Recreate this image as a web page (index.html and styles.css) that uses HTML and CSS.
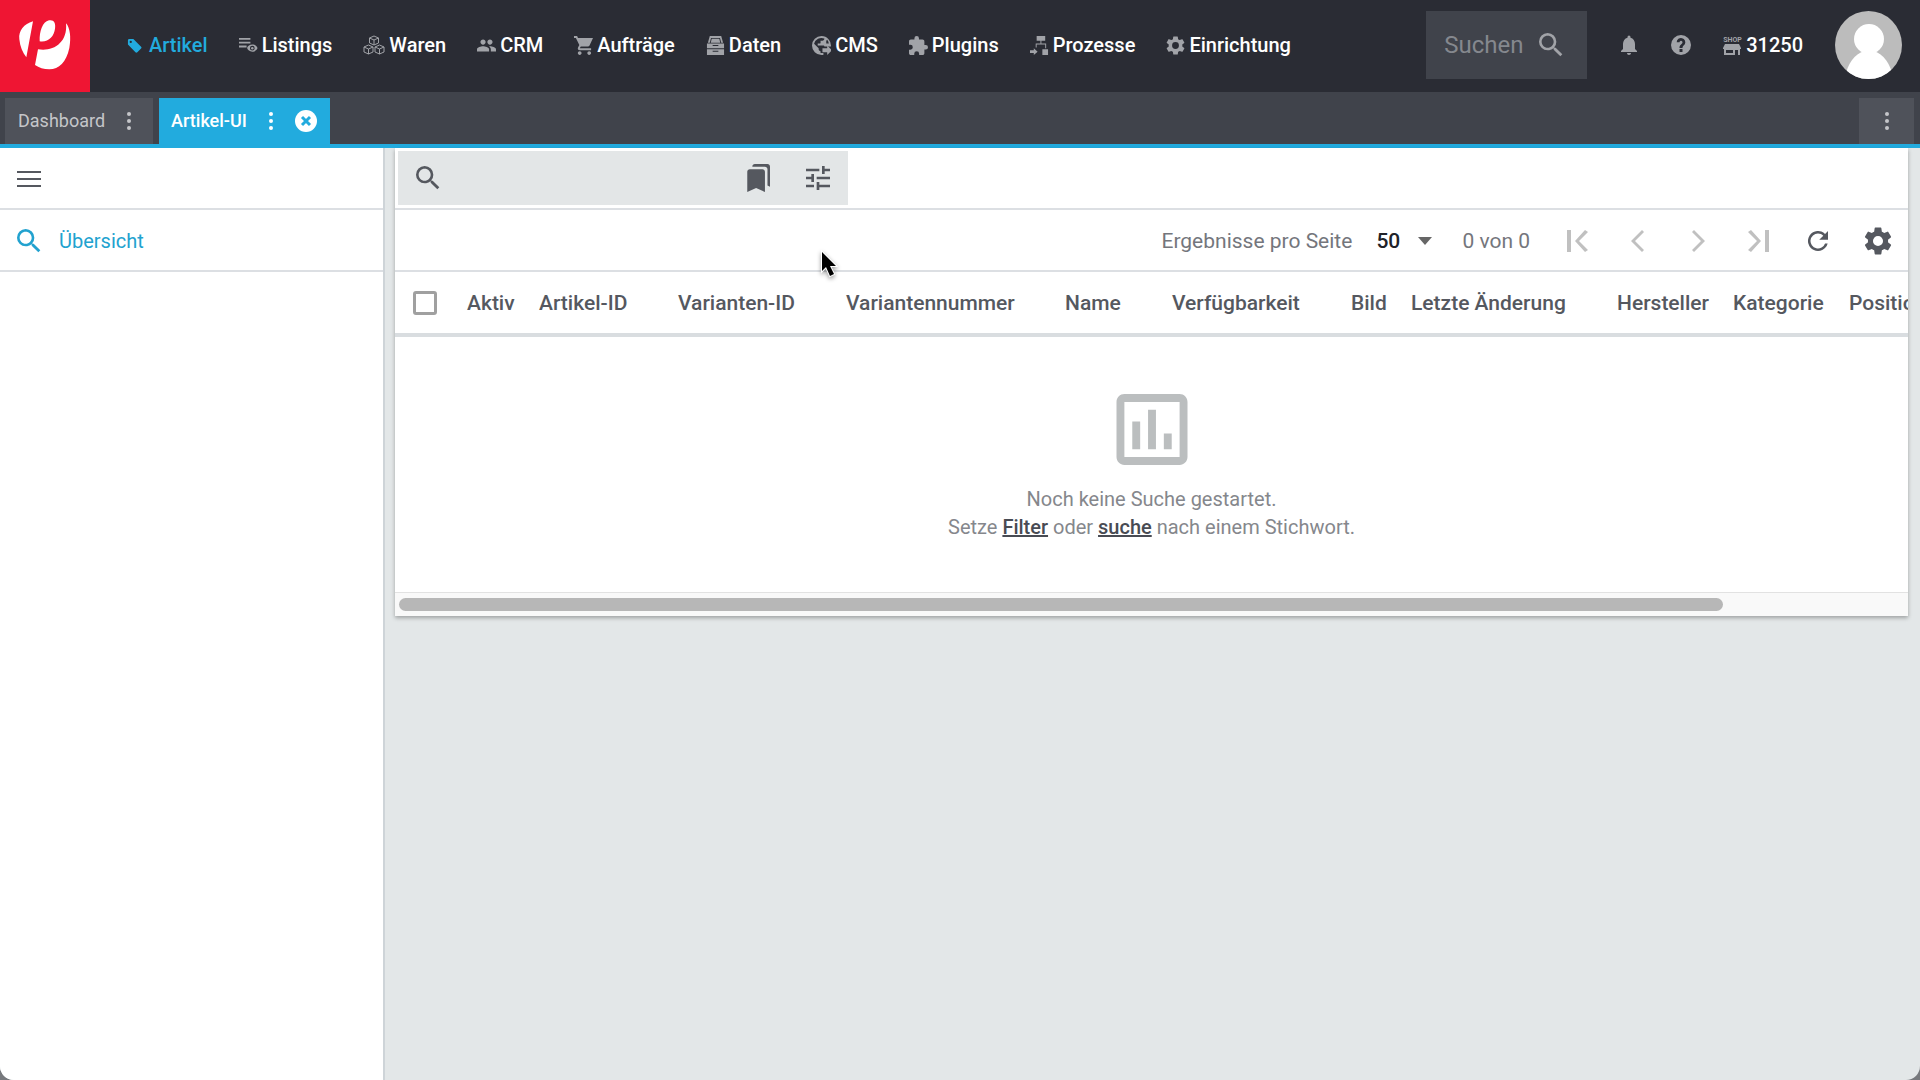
FILE: index.html
```
<!DOCTYPE html>
<html lang="de">
<head>
    <meta charset="UTF-8">
    <meta name="viewport" content="width=device-width, initial-scale=1.0">
    <title>Artikel-UI</title>
    <link rel="stylesheet" href="styles.css">
</head>
<body>
    <!-- shared icons -->
    <svg class="sprite" aria-hidden="true">
        <symbol id="search" viewBox="3 3 18 18"><path d="M15.5 14h-.79l-.28-.27A6.47 6.47 0 0 0 16 9.5 6.5 6.5 0 1 0 9.5 16c1.61 0 3.09-.59 4.23-1.57l.27.28v.79l5 4.99L20.49 19l-4.99-5zm-6 0C7.01 14 5 11.99 5 9.5S7.01 5 9.5 5 14 7.01 14 9.5 11.99 14 9.5 14z"/></symbol>
        <symbol id="gear" viewBox="2 2 20 20"><path d="M19.14 12.94c.04-.3.06-.61.06-.94 0-.32-.02-.64-.07-.94l2.03-1.58a.49.49 0 0 0 .12-.61l-1.92-3.32a.49.49 0 0 0-.59-.22l-2.39.96a7 7 0 0 0-1.62-.94l-.36-2.54a.48.48 0 0 0-.48-.41h-3.84a.47.47 0 0 0-.47.41l-.36 2.54c-.59.24-1.13.57-1.62.94l-2.39-.96a.48.48 0 0 0-.59.22L2.74 8.87a.47.47 0 0 0 .12.61l2.03 1.58a6 6 0 0 0-.07.94c0 .31.02.64.07.94l-2.03 1.58a.49.49 0 0 0-.12.61l1.92 3.32c.12.22.37.29.59.22l2.39-.96c.5.38 1.03.7 1.62.94l.36 2.54c.05.24.24.41.48.41h3.84c.24 0 .44-.17.47-.41l.36-2.54a7 7 0 0 0 1.62-.94l2.39.96c.22.08.47 0 .59-.22l1.92-3.32a.47.47 0 0 0-.12-.61zM12 15.6a3.6 3.6 0 1 1 0-7.2 3.6 3.6 0 0 1 0 7.2z"/></symbol>
        <symbol id="dots" viewBox="0 0 6 20"><circle cx="3" cy="3" r="2"/><circle cx="3" cy="10" r="2"/><circle cx="3" cy="17" r="2"/></symbol>
    </svg>

    <header class="topbar">
        <a class="logo" href="#" aria-label="Startseite">
            <svg viewBox="0 0 270 276">
                <path d="M99 64C72 72 55 92 58 118c2 22 10 40 21 54z"/>
                <path d="M119 124c-1-30 8-58 28-63 14-3 21 8 18 25-3 23-20 42-46 38z"/>
                <path d="M114 148c43 8 90-18 84-78 12 13 16 42 10 74-9 42-31 64-60 64-17 0-31-5-43-13z"/>
            </svg>
        </a>
        <nav class="main-nav">
            <a class="current" href="#">
                <svg class="icon small" viewBox="0 0 16 16"><path d="M1 2.500A1.500 1.500 0 0 1 2.500 1h4.300L15 9.200a1.400 1.400 0 0 1 0 2l-4 4a1.400 1.400 0 0 1-2 0L1 7zM4 3a1.200 1.200 0 1 0 0 2.400A1.200 1.200 0 0 0 4 3z"/></svg>Artikel
            </a>
            <a href="#">
                <svg class="icon" viewBox="0 0 20 20"><path d="M0 2h12v2H0zM0 6h12v2H0zM0 10h8v2H0z"/><path d="M14 9c-2.800 0-4.800 1.600-5.500 3.700C9.200 14.900 11.200 16.500 14 16.500s4.800-1.600 5.500-3.800C18.800 10.600 16.800 9 14 9zm0 1.300a2.500 2.500 0 1 1 0 5 2.500 2.500 0 0 1 0-5z"/><circle cx="14" cy="12.800" r="1.300"/></svg>Listings
            </a>
            <a href="#">
                <svg class="icon wide line" viewBox="0 0 22 20"><path d="M11 1l4.500 2v5L11 10 6.500 8V3zM6.500 3L11 5l4.500-2M11 5v5M5.500 10l4.500 2v5l-4.500 2L1 17v-5zM1 12l4.500 2 4.500-2M5.500 14v5M16.500 10l4.500 2v5l-4.500 2-4.500-2v-5zM12 12l4.500 2 4.500-2M16.500 14v5"/></svg>Waren
            </a>
            <a href="#">
                <svg class="icon" viewBox="1 2 22 20"><path d="M16 11c1.660 0 2.990-1.340 2.990-3S17.660 5 16 5s-3 1.340-3 3 1.340 3 3 3zm-8 0c1.660 0 2.990-1.340 2.990-3S9.660 5 8 5 5 6.340 5 8s1.340 3 3 3zm0 2c-2.330 0-7 1.170-7 3.500V19h14v-2.500c0-2.330-4.670-3.500-7-3.500zm8 0c-.29 0-.62.02-.97.05 1.160.84 1.970 1.970 1.970 3.450V19h6v-2.500c0-2.330-4.670-3.500-7-3.500z"/></svg>CRM
            </a>
            <a href="#">
                <svg class="icon" viewBox="1 2 20 20"><path d="M7 18c-1.100 0-1.990.9-1.990 2S5.900 22 7 22s2-.9 2-2-.9-2-2-2zM1 2v2h2l3.600 7.590-1.350 2.450C4.520 15.370 5.480 17 7 17h12v-2H7.420l-.17-.25.9-1.750h7.450c.75 0 1.410-.41 1.750-1.030L21 4H5.210l-.94-2zm16 16c-1.100 0-1.990.9-1.990 2s.89 2 1.990 2 2-.9 2-2-.9-2-2-2z"/></svg>Aufträge
            </a>
            <a href="#">
                <svg class="icon" viewBox="0 0 20 20"><path d="M4 0h12l2 7h-2l-1.300-5H5.300L4 7H2zM6 3h8l1 4H5zM1 8h18v5H1zm6 1.500v1h6v-1zM1 14h18v6H1zm6 1.500v1h6v-1z" fill-rule="evenodd"/></svg>Daten
            </a>
            <a href="#">
                <svg class="icon" viewBox="2 2 20 20"><path d="M12 2a10 10 0 0 0 0 20h2v-2l-3-.1v-1.900c-1.100 0-2-.9-2-2v-1L4.200 10.200A8 8 0 0 1 15 4.600V5c0 1.100-.9 2-2 2h-2v2c0 .55-.45 1-1 1H8v2h6c.55 0 1 .45 1 1h6.900A10 10 0 0 0 12 2zm7.700 8H17V7l1-1a8 8 0 0 1 1.700 4z"/><path d="M13 15h5v-3l5 5-5 5v-3h-5z"/></svg>CMS
            </a>
            <a href="#">
                <svg class="icon" viewBox="2 1 21 21"><path d="M20.500 11H19V7c0-1.100-.9-2-2-2h-4V3.500a2.500 2.500 0 0 0-5 0V5H4c-1.100 0-1.990.9-1.990 2v3.800H3.500a2.700 2.700 0 0 1 0 5.400H2V20c0 1.100.9 2 2 2h3.800v-1.500a2.700 2.700 0 0 1 5.400 0V22H17c1.100 0 2-.9 2-2v-4h1.500a2.500 2.500 0 0 0 0-5z"/></svg>Plugins
            </a>
            <a href="#">
                <svg class="icon" viewBox="0 0 20 20"><path d="M7 0h9v5h-4v3h5v5h-1v-4H7v3H6V8h5V5H7zM13 14h6v6h-6zM0 15h4v-2l4 3.500L4 20v-2H0z"/></svg>Prozesse
            </a>
            <a href="#">
                <svg class="icon"><use href="#gear"/></svg>Einrichtung
            </a>
        </nav>
        <label class="global-search">
            <input type="text" placeholder="Suchen" aria-label="Suchen">
            <svg class="icon large"><use href="#search"/></svg>
        </label>
        <div class="top-actions">
            <button aria-label="Benachrichtigungen">
                <svg class="icon" viewBox="2 2 20 20"><path d="M12 22c1.100 0 2-.9 2-2h-4c0 1.100.9 2 2 2zm6-6v-5c0-3.070-1.640-5.640-4.500-6.320V4a1.500 1.500 0 0 0-3 0v.68C7.630 5.360 6 7.920 6 11v5l-2 2v1h16v-1z"/></svg>
            </button>
            <button aria-label="Hilfe">
                <svg class="icon" viewBox="2 2 20 20"><path d="M12 2a10 10 0 1 0 0 20 10 10 0 0 0 0-20zm1.500 17h-3v-3h3zm2.300-7.700l-.9.900c-.8.800-1.400 1.300-1.400 2.800h-3v-.5c0-1.300.5-2 1.300-2.800l1.200-1.300c.3-.3.500-.7.500-1.200a1.500 1.500 0 0 0-3 0H7.700a4.300 4.300 0 1 1 8.100 2.100z"/></svg>
            </button>
            <a class="shop" href="#">
                <span class="shop-icon">
                    <span>SHOP</span>
                    <svg viewBox="0 0 18 11"><path d="M2 0h14l2 4v1h-1v6h-2V6h-3v5H1V5H0V4zm1 6v3h7V6z" fill-rule="evenodd"/></svg>
                </span>
                31250
            </a>
        </div>
        <button class="avatar" aria-label="Profil">
            <svg viewBox="0 0 68 68"><circle cx="34" cy="28" r="15"/><path d="M10 68c2-16 10-25 19-28h10c9 3 17 12 19 28z"/></svg>
        </button>
    </header>

    <div class="tabbar">
        <div class="tab">
            <a href="#">Dashboard</a>
            <button aria-label="Dashboard Menü"><svg class="dots"><use href="#dots"/></svg></button>
        </div>
        <div class="tab active">
            <a href="#">Artikel-UI</a>
            <button aria-label="Artikel-UI Menü"><svg class="dots"><use href="#dots"/></svg></button>
            <button class="close" aria-label="Schließen">
                <svg viewBox="0 0 22 22"><circle cx="11" cy="11" r="11"/><path d="M7 7l8 8M15 7l-8 8"/></svg>
            </button>
        </div>
        <button class="tab-menu" aria-label="Alle Tabs"><svg class="dots"><use href="#dots"/></svg></button>
    </div>

    <div class="workspace">
        <aside class="sidebar">
            <div class="side-row">
                <button aria-label="Menü"><svg class="icon large" viewBox="0 0 24 24"><path d="M0 4h24v2H0zM0 11h24v2H0zM0 18h24v2H0z"/></svg></button>
            </div>
            <a class="side-row link" href="#">
                <svg class="icon large"><use href="#search"/></svg>Übersicht
            </a>
        </aside>

        <main class="content">
            <section class="panel">
                <div class="toolbar">
                    <div class="filter">
                        <svg class="icon large"><use href="#search"/></svg>
                        <input type="text" id="keyword" aria-label="Stichwort">
                        <button aria-label="Gespeicherte Filter">
                            <svg class="bookmark" viewBox="2 1 19 22"><path d="M19 18l2 1V3c0-1.100-.9-2-2-2H8.990C7.890 1 7 1.900 7 3h10c1.100 0 2 .9 2 2zM15 5H5c-1.100 0-2 .9-2 2v16l7-3 7 3V7c0-1.100-.9-2-2-2z"/></svg>
                        </button>
                        <button aria-label="Filter">
                            <svg class="icon large" viewBox="3 3 18 18"><path d="M3 17v2h6v-2zM3 5v2h10V5zm10 16v-2h8v-2h-8v-2h-2v6zM7 9v2H3v2h4v2h2V9zm14 4v-2H11v2zm-6-4h2V7h4V5h-4V3h-2z"/></svg>
                        </button>
                    </div>
                </div>

                <div class="pager">
                    <label for="page-size">Ergebnisse pro Seite</label>
                    <div class="page-size">
                        <select id="page-size">
                            <option>50</option>
                        </select>
                        <svg viewBox="0 0 14 8"><path d="M0 0h14L7 8z"/></svg>
                    </div>
                    <span class="count">0 von 0</span>
                    <button disabled aria-label="Erste Seite"><svg class="icon large" viewBox="0 0 24 24"><path d="M1 1h4v22H1zM22 3L13 12l9 9-3 2-10-11L19 1z"/></svg></button>
                    <button disabled aria-label="Vorherige Seite"><svg class="icon large" viewBox="0 0 24 24"><path d="M18 3L9 12l9 9-2 2L5 12 16 1z"/></svg></button>
                    <button disabled aria-label="Nächste Seite"><svg class="icon large" viewBox="0 0 24 24"><path d="M6 3l9 9-9 9 2 2 11-11L8 1z"/></svg></button>
                    <button disabled aria-label="Letzte Seite"><svg class="icon large" viewBox="0 0 24 24"><path d="M19 1h4v22h-4zM2 3l9 9-9 9 3 2 10-11L5 1z"/></svg></button>
                    <button aria-label="Neu laden"><svg class="icon" viewBox="4 4 16 16"><path d="M17.650 6.350A8 8 0 1 0 19.730 14h-2.080A6 6 0 1 1 12 6c1.660 0 3.140.69 4.220 1.780L13 11h7V4z"/></svg></button>
                    <button aria-label="Einstellungen"><svg class="icon gear"><use href="#gear"/></svg></button>
                </div>

                <div class="table-wrap">
                    <table>
                        <colgroup>
                            <col class="c-check"><col class="c-active"><col class="c-id"><col class="c-variant"><col class="c-number"><col class="c-name"><col class="c-stock"><col class="c-image"><col class="c-date"><col class="c-maker"><col class="c-maker"><col class="c-position">
                        </colgroup>
                        <thead>
                            <tr>
                                <th><input type="checkbox" aria-label="Alle auswählen"></th>
                                <th>Aktiv</th>
                                <th>Artikel-ID</th>
                                <th>Varianten-ID</th>
                                <th>Variantennummer</th>
                                <th>Name</th>
                                <th>Verfügbarkeit</th>
                                <th>Bild</th>
                                <th>Letzte Änderung</th>
                                <th>Hersteller</th>
                                <th>Kategorie</th>
                                <th>Position</th>
                            </tr>
                        </thead>
                    </table>
                </div>

                <div class="empty">
                    <svg viewBox="3 3 18 18"><path d="M9 17H7v-7h2zm4 0h-2V7h2zm4 0h-2v-4h2zm2 2H5V5h14zm0-16H5c-1.100 0-2 .9-2 2v14c0 1.100.9 2 2 2h14c1.100 0 2-.9 2-2V5c0-1.100-.9-2-2-2z"/></svg>
                    <p>Noch keine Suche gestartet.<br>Setze <a href="#">Filter</a> oder <a href="#keyword">suche</a> nach einem Stichwort.</p>
                </div>
                <div class="scrollbar"><div class="thumb"></div></div>
            </section>
        </main>
    </div>

    <svg class="pointer" viewBox="0 0 18 28"><path d="M2 2v19l4-4 4 9 4-2-4-8h6z"/></svg>
</body>
</html>
```
FILE: styles.css
```
* {
    margin: 0;
    padding: 0;
    box-sizing: border-box;
}

html {
    background: #77797d;
}

body {
    display: flex;
    flex-direction: column;
    min-height: 100vh;
    font-family: Roboto, sans-serif;
    font-size: 20px;
    line-height: 28px;
    color: #55585f;
    background: #e3e7e8;
    border-radius: 0 0 14px 14px;
    overflow: hidden;
}

a {
    color: inherit;
    text-decoration: none;
}

button,
input,
select {
    font: inherit;
    color: inherit;
    background: none;
    border: none;
    outline: none;
}

button {
    display: flex;
    align-items: center;
    justify-content: center;
    cursor: pointer;
}

svg {
    display: block;
    flex: none;
    fill: currentColor;
}

.sprite {
    position: absolute;
    width: 0;
    height: 0;
}

.icon {
    width: 20px;
    height: 20px;
}

.icon.large {
    width: 24px;
    height: 24px;
}

.icon.gear {
    width: 28px;
    height: 28px;
}

/* top bar */
.topbar {
    display: flex;
    align-items: center;
    height: 92px;
    padding: 0 18px 2px 0;
    background: #2a2c34;
    color: #fff;
}

.logo {
    align-self: flex-start;
    width: 90px;
    height: 92px;
    background: #ef1533;
}

.main-nav {
    display: flex;
    gap: 31px;
    margin-left: 37px;
    font-weight: 500;
}

.main-nav a {
    display: flex;
    align-items: center;
    gap: 4px;
    height: 28px;
}

.main-nav .current {
    gap: 7px;
    color: #22abde;
}

.main-nav .icon {
    width: 19px;
    height: 19px;
}

.main-nav .small {
    width: 15px;
    height: 15px;
}

.main-nav .wide {
    width: 22px;
    height: 20px;
}

.main-nav .line {
    fill: none;
    stroke: currentColor;
}

.main-nav .icon,
.top-actions svg,
.global-search svg {
    color: #a1a3a8;
}

.main-nav .current .icon {
    color: inherit;
}

.global-search {
    display: flex;
    align-items: center;
    justify-content: space-between;
    width: 161px;
    height: 68px;
    margin-left: auto;
    padding: 0 24px 0 18px;
    background: #40434b;
}

.global-search input {
    width: 84px;
    font-size: 24px;
}

.global-search input::placeholder {
    color: #85888e;
    opacity: 1;
}

.top-actions {
    display: flex;
    align-items: center;
    gap: 32px;
    margin: 0 32px;
    font-weight: 500;
}

.shop {
    display: flex;
    align-items: center;
    gap: 5px;
}

.shop-icon {
    width: 18px;
    font-size: 7px;
    font-weight: 700;
    line-height: 8px;
    color: #a1a3a8;
}

.avatar {
    width: 67px;
    height: 68px;
    border-radius: 50%;
    background: #bcbcbc;
    overflow: hidden;
}

.avatar svg {
    width: 68px;
    height: 68px;
}

/* tabs */
.tabbar {
    display: flex;
    gap: 6px;
    height: 56px;
    padding: 6px 6px 0 5px;
    background: #40434b;
    border-bottom: 4px solid #22abde;
}

.tab {
    display: flex;
    align-items: center;
    gap: 20px;
    padding: 0 20px 0 13px;
    font-size: 18px;
    background: #4f525a;
    color: #c5c6c9;
}

.tab.active {
    padding: 0 13px 0 12px;
    font-weight: 500;
    background: #22abde;
    color: #fff;
}

.dots {
    width: 8px;
    height: 20px;
}

.close svg {
    width: 22px;
    height: 22px;
}

.close path {
    stroke: #22abde;
    stroke-width: 3px;
}

.tab-menu {
    width: 55px;
    margin-left: auto;
    background: #4f525a;
    color: #c5c6c9;
}

/* page */
.workspace {
    display: flex;
    flex: 1;
}

.sidebar {
    width: 385px;
    flex: none;
    background: #fff;
    border-right: 2px solid #ced4d8;
}

.side-row {
    display: flex;
    align-items: center;
    gap: 18px;
    height: 62px;
    padding: 2px 17px 0;
    border-bottom: 2px solid #dcdfe3;
}

.link {
    color: #22a2cf;
}

.content {
    flex: 1;
    min-width: 0;
    padding: 0 12px 0 10px;
}

.panel {
    background: #fff;
    box-shadow: 0 2px 4px rgba(0, 0, 0, 0.3);
    overflow: hidden;
}

.toolbar {
    height: 62px;
    padding: 3px;
    border-bottom: 2px solid #dcdfe3;
}

.filter {
    display: flex;
    align-items: center;
    width: 450px;
    height: 54px;
    padding-left: 18px;
    background: #e3e6e7;
}

.filter input {
    flex: 1;
    min-width: 0;
    padding: 0 12px;
}

.filter button {
    width: 60px;
    height: 54px;
}

.bookmark {
    width: 24px;
    height: 28px;
}

.pager {
    display: flex;
    align-items: center;
    justify-content: flex-end;
    height: 62px;
    padding-top: 2px;
    border-bottom: 2px solid #dcdfe3;
    font-size: 21px;
    color: #74767c;
}

.pager button {
    width: 60px;
    height: 60px;
    color: #55585f;
}

.pager button:disabled {
    color: #c0c0c0;
    cursor: default;
}

.page-size {
    display: flex;
    align-items: center;
    margin: 0 30px 0 24px;
}

.page-size select {
    width: 57px;
    margin-right: -15px;
    font-weight: 500;
    color: #202228;
    appearance: none;
}

.page-size svg {
    width: 14px;
    height: 8px;
    color: #666;
    pointer-events: none;
}

.count {
    margin-right: 18px;
}

.table-wrap {
    overflow: hidden;
    border-bottom: 4px solid #d9dde0;
}

table {
    width: 1708px;
    table-layout: fixed;
    border-collapse: collapse;
}

th {
    height: 61px;
    padding-left: 12px;
    font-size: 21px;
    font-weight: 500;
    text-align: left;
    white-space: nowrap;
}

th:first-child {
    padding-left: 18px;
}

th input {
    display: block;
    width: 24px;
    height: 24px;
    border: 3px solid #a0a0a0;
    border-radius: 3px;
    appearance: none;
}

.c-check { width: 60px; }
.c-active { width: 72px; }
.c-id { width: 139px; }
.c-variant { width: 168px; }
.c-number { width: 219px; }
.c-name { width: 107px; }
.c-stock { width: 179px; }
.c-image { width: 60px; }
.c-date { width: 206px; }
.c-maker { width: 116px; }

.empty {
    display: flex;
    flex-direction: column;
    align-items: center;
    gap: 20px;
    padding: 57px 0 51px;
    text-align: center;
    color: #85878c;
}

.empty svg {
    width: 72px;
    height: 71px;
    color: #bbbebf;
}

.empty a {
    font-weight: 500;
    color: #484b53;
    text-decoration: underline;
}

.scrollbar {
    height: 24px;
    padding: 5px 4px;
    background: #f9f9f9;
    border-top: 1px solid #e2e2e2;
}

.thumb {
    width: 88%;
    height: 13px;
    border-radius: 8px;
    background: #b7b7b7;
}

.pointer {
    position: absolute;
    left: 820px;
    top: 250px;
    width: 18px;
    height: 28px;
    fill: #000;
    stroke: #fff;
    stroke-width: 2px;
    paint-order: stroke;
    filter: drop-shadow(0 2px 2px rgba(0, 0, 0, 0.4));
}
```
